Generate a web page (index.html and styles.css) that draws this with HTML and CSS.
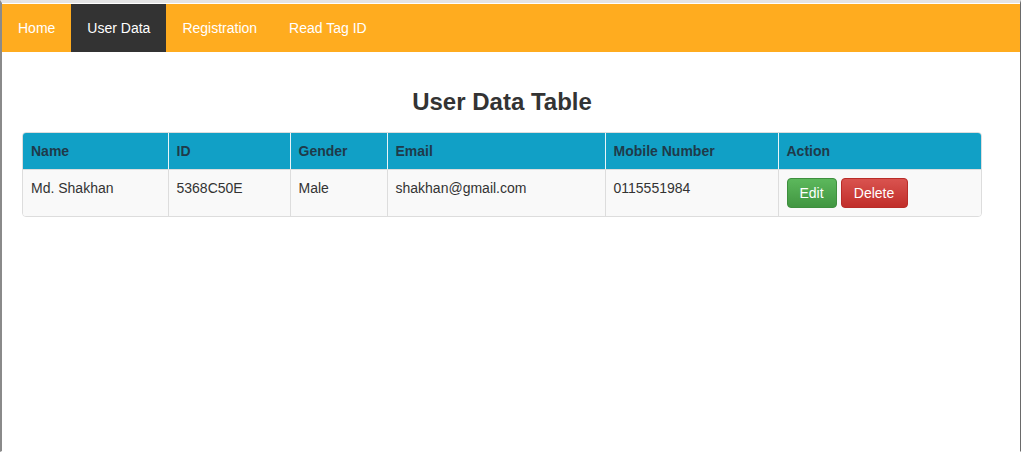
FILE: index.html
```html
<!DOCTYPE html>
<html>
<head>
<meta charset="utf-8">
<link rel="stylesheet" href="styles.css">
</head>
<body>
<div class="frame">
  <nav class="navbar">
    <a class="nav-item" href="#">Home</a>
    <a class="nav-item active" href="#">User Data</a>
    <a class="nav-item" href="#">Registration</a>
    <a class="nav-item" href="#">Read Tag ID</a>
  </nav>
  <main class="container">
    <h2 class="title">User Data Table</h2>
    <div class="table-wrap">
      <table class="data">
        <thead>
          <tr>
            <th class="c-name">Name</th>
            <th class="c-id">ID</th>
            <th class="c-gender">Gender</th>
            <th class="c-email">Email</th>
            <th class="c-mobile">Mobile Number</th>
            <th class="c-action">Action</th>
          </tr>
        </thead>
        <tbody>
          <tr>
            <td>Md. Shakhan</td>
            <td>5368C50E</td>
            <td>Male</td>
            <td>shakhan@gmail.com</td>
            <td>0115551984</td>
            <td class="actions"><a class="btn btn-edit" href="#">Edit</a><a class="btn btn-delete" href="#">Delete</a></td>
          </tr>
        </tbody>
      </table>
    </div>
  </main>
</div>
</body>
</html>
```
FILE: styles.css
```css
html, body {
  margin: 0;
  padding: 0;
  background: #ffffff;
}
body {
  font-family: "Liberation Sans", Arial, sans-serif;
  font-size: 14px;
  color: #333333;
}
.frame {
  width: 1018px;
  height: 448px;
  border-top: 3px solid #e4e4e4;
  border-left: 2px solid #8a8a8a;
  border-right: 1px solid #6a6a6a;
  border-bottom: 1px solid #ffffff;
  box-sizing: content-box;
  background: #fff;
}
.navbar {
  display: flex;
  height: 48px;
  margin-top: 1px;
  background: #ffac1f;
}
.nav-item {
  display: block;
  padding: 0 16px;
  line-height: 48px;
  color: #ffffff;
  text-decoration: none;
  font-size: 14px;
}
.nav-item.active {
  background: #333333;
}
.container {
  width: 960px;
  padding-left: 20px;
}
.title {
  margin: 37px 0 0 0;
  height: 43px;
  line-height: 26px;
  font-size: 24px;
  font-weight: bold;
  text-align: center;
  color: #333333;
}
.table-wrap {
  border: 1px solid #dddddd;
  border-radius: 4px;
  overflow: hidden;
}
.data {
  width: 100%;
  border-collapse: collapse;
  table-layout: fixed;
}
.data th {
  box-sizing: border-box;
  background: #11a0c6;
  color: #1f3a4a;
  font-weight: bold;
  text-align: left;
  height: 36px;
  padding: 0 8px;
  border-left: 1px solid #e8f4f8;
  border-bottom: 1px solid #dddddd;
}
.data th:first-child, .data td:first-child {
  border-left: none;
}
.data td {
  background: #f9f9f9;
  padding: 8px 8px 8px 8px;
  vertical-align: top;
  border-left: 1px solid #dddddd;
  height: 30px;
  line-height: 20px;
  white-space: nowrap;
}
.c-name { width: 145px; }
.c-id { width: 122px; }
.c-gender { width: 97px; }
.c-email { width: 218px; }
.c-mobile { width: 173px; }
.c-action { width: auto; }
.btn {
  display: inline-block;
  height: 30px;
  border-radius: 4px;
  color: #ffffff;
  text-decoration: none;
  font-size: 14px;
  vertical-align: top;
  box-sizing: border-box;
  line-height: 28px;
  padding: 0;
  text-align: center;
  margin-right: 4px;
}
.btn-edit {
  background: linear-gradient(#5cb85c, #419641);
  border: 1px solid #3e8f3e;
  width: 50px;
}
.btn-delete {
  background: linear-gradient(#d9534f, #c12e2a);
  border: 1px solid #b92c28;
  width: 67px;
}
```
